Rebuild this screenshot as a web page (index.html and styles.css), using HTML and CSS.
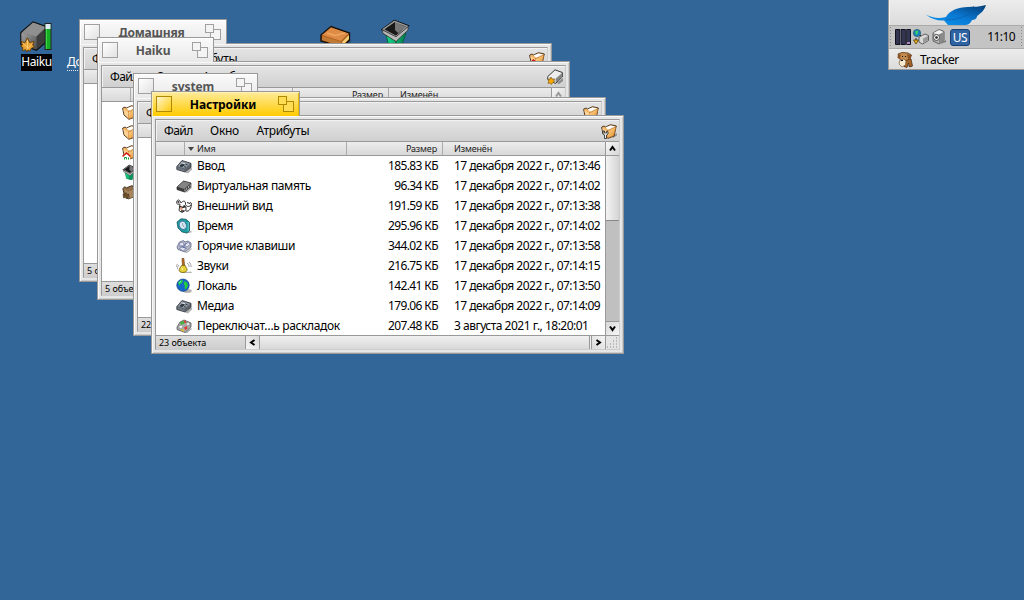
FILE: index.html
```html
<!DOCTYPE html>
<html lang="ru">
<head>
<meta charset="utf-8">
<title>Haiku</title>
<link rel="stylesheet" href="styles.css">
</head>
<body>
<svg class="defs" aria-hidden="true">
  <defs>
    <linearGradient id="gold" x1="0" y1="0" x2="1" y2="1"><stop offset="0" stop-color="#ffdc9a"/><stop offset="1" stop-color="#e38a24"/></linearGradient>
    <linearGradient id="steel" x1="0" y1="0" x2="1" y2="1"><stop offset="0" stop-color="#a2a2a2"/><stop offset="1" stop-color="#4c4c4c"/></linearGradient>
    <linearGradient id="leafblue" x1="0" y1="1" x2="1" y2="0"><stop offset="0" stop-color="#0a9af5"/><stop offset=".5" stop-color="#0a78d2"/><stop offset="1" stop-color="#023a70"/></linearGradient>
    <linearGradient id="green" x1="0" y1="0" x2="1" y2="0"><stop offset="0" stop-color="#16e08c"/><stop offset="1" stop-color="#047a50"/></linearGradient>
  </defs>
  <symbol id="folder" viewBox="0 0 16 16">
    <path d="M12 13l4-3v2.500l-4 2.500z" fill="#000" opacity=".3"/>
    <path d="M.6 4.200L3 3l1.500 1 5-2.300 5.900 1.300-.6 1.500-1.600 8.500L7 15.300 2 11z" fill="#f4b463" stroke="#3c2a18" stroke-width=".9"/>
    <path d="M4.500 4.500l5-2 4.500 1-2 2-5 1z" fill="#fff"/>
    <path d="M6.300 7.500l3-.6 1-1.600 4.700-1-2.300 8.500-6.400 2.200z" fill="url(#gold)" stroke="#a8601a" stroke-width=".5"/>
    <path d="M1.300 5L6.200 8v6L2.500 10.500z" fill="#fbd296"/>
  </symbol>
  <symbol id="folder-home" viewBox="0 0 16 16">
    <use href="#folder"/><path d="M1.500 11.500L4.500 9 8 11.500V16H1.500z" fill="#fff"/><path d="M.5 12.500L4.500 9l4 3.500" fill="none" stroke="#d01515" stroke-width="1.500"/><path d="M2.500 15.500v-2h2v2m2 0v-2" stroke="#159a35" fill="none"/>
  </symbol>
  <symbol id="folder-set" viewBox="0 0 16 16">
    <use href="#folder"/><path d="M2 8v3l1.500 1v3.500h2V12L7 11V8.500L5.700 8v2H3.500V8z" fill="#eee" stroke="#222" stroke-width=".8"/>
  </symbol>
  <symbol id="folder-brown" viewBox="0 0 16 16">
    <path d="M.8 4.500l2-1.700 1.700 1 5-2 5.500.8-.4 1.500-2 8.500L6 15 2.300 11z" fill="#8d6c46" stroke="#3c2a18" stroke-width=".9"/>
    <path d="M2 5l4 2.500 9-3-2 8-7 2z" fill="#a7865d"/>
    <path d="M1 10l2 .5 1-2 1 2 2-.5-.5 2 1 1-2.500.5L4.500 15l-.7-1.500L1.500 14z" fill="#705028" stroke="#3d2c18" stroke-width=".5"/>
  </symbol>
  <symbol id="trash" viewBox="0 0 32 32">
    <path d="M5 12l4 17 11 3 6-17z" fill="url(#green)" stroke="#063" stroke-width="1"/>
    <path d="M16 20v11" stroke="#06643f" stroke-width="1.500"/>
    <path d="M3 11.500L14.500 3l13 5-11 11z" fill="#191919" stroke="#000" stroke-width="2.400"/>
    <path d="M15 4v8l3 3 8-6z" fill="#777"/>
    <path d="M3.200 11.300L14.500 3.300l12.700 5L16 18.500z" fill="none" stroke="#999" stroke-width="1.500"/>
    <path d="M2.700 12v3L16 23.500 28 12V8.800L16 18.800z" fill="#b9b9b9" stroke="#333" stroke-width=".8"/>
  </symbol>
  <symbol id="leaf" viewBox="0 0 14 14">
    <path d="M1 4l3.500 1.500L7 .8l2 4.500L13 4l-1.200 3.600L13.500 9l-3.200 1.800-.8 2.400-2-1L6.500 14 5.400 12 2 12.500l.8-2.500L.5 8.500l1.700-1z" fill="#e9a336" stroke="#5d3b06" stroke-width=".8"/><path d="M3 6l4 4m0-7v8m4-4l-4 4" stroke="#ffd27a" stroke-width=".8" fill="none"/>
  </symbol>
  <symbol id="disk" viewBox="0 0 32 32">
    <path d="M1 12L13.500 1l14 5v15L17 30 1 24z" fill="#6e6e6e" stroke="#111" stroke-width="1.500"/>
    <path d="M1.500 12L13.500 1.500l13.500 5L17 16z" fill="#8f8f8f"/>
    <path d="M1.500 12.500L17 16v13.500L1.500 24z" fill="url(#steel)"/>
    <path d="M17 16L27 6.500V21L17 29.500z" fill="#3d3d3d"/>
  </symbol>
  <symbol id="drive" viewBox="0 0 16 16">
    <path d="M10 14l6-5v3l-4 3z" fill="#000" opacity=".35"/><path d="M.8 7.500L8 .8l7.300 2.700V8L8.500 14.500l-7.700-4z" fill="#ededed" stroke="#222" stroke-width=".9"/><path d="M8.500 9.700L15 4v4l-6.500 6z" fill="#868686"/><path d="M1.200 8l7.300 1.700v4.300l-7.300-4z" fill="#ccc"/>
    <path d="M1 10l2 .3L4 8l1.300 2.300L7.500 10l-.8 2 1 1.200-2 .5L4.300 15.500 3 14l-2 .3.600-1.600z" fill="#f5a800" stroke="#5d3b06" stroke-width=".5"/>
  </symbol>
  <symbol id="box" viewBox="0 0 16 16">
    <path d="M9 14.500l6-5h1v2l-4 4z" opacity=".3"/><path d="M.8 8.500L6 2.500l9 2.800v4L9 14 .8 11.500z" fill="#5b626b" stroke="#30343a" stroke-width=".8"/><path d="M1.500 8.300L6.200 3.200l8 2.500L9 10.500z" fill="#8c959f"/><path d="M4 8l2.500-2 2 .6-2.300 2zM9 6l2.500.8M8 8.600l2 .6" fill="#30363e" stroke="#2d333a" stroke-width=".9"/><path d="M1.500 9.300l7 2.200v2L1.500 11z" fill="#6f7882"/><path d="M5.500 4.800l4 1.200" stroke="#dce3ea"/>
  </symbol>
  <symbol id="chip" viewBox="0 0 16 16">
    <path d="M8 14l7-6 1 2-5 4.500z" opacity=".3"/><path d="M1 9l6.500-6 7.500 2v3.500L8.500 14l-7.500-2.500z" fill="#3d3d3d" stroke="#222" stroke-width=".7"/><path d="M1.500 8.700l6-5.200 6.800 1.800-6 5.700z" fill="#858585"/><path d="M9 11.300v2m1.700-3.500v2m1.800-3.700v2m1.700-3.700v2" stroke="#ccc" stroke-width=".9"/>
  </symbol>
  <symbol id="look" viewBox="0 0 16 16">
    <path d="M4 6C1 7-.2 5 1 3s3-1 4 2c1.500-2 4-3 4.500 0 .5 2-1 3-2 3l2.500 1v3l-4 2.500-3-2z" fill="#fff" stroke="#222" stroke-width=".9"/><path d="M3.500 8.500l3 1 3-1M5 13h3" stroke="#222" stroke-width="1.500" fill="none"/><path d="M4 9l2.500.6v3L4.500 12z" fill="#e39775"/><path d="M10 13c3 1 6-3 5.200-8l-1-.6M11 4.500l3 1M10 7c1 2 3 2 5 0" stroke="#222" fill="none"/><path d="M1.500 3.500l1.800 1" stroke="#333" stroke-width="1.500"/>
  </symbol>
  <symbol id="clock" viewBox="0 0 16 16">
    <path d="M9 15.500l6.500-3v2z" opacity=".3"/><path d="M1 4L5 .8l5 .5 3.500 3V13L11 15l-5-1-4-4z" fill="#1c9da0" stroke="#15575e" stroke-width=".8"/><ellipse cx="6.800" cy="7.300" rx="3.500" ry="4.300" fill="#d3e8f7" stroke="#3e769c" transform="rotate(-18 6.800 7.300)"/><path d="M6.500 5l.5 3 1.500 1" stroke="#777" fill="none" stroke-width=".6"/><path d="M12.200 4v9" stroke="#63cccc"/>
  </symbol>
  <symbol id="keys" viewBox="0 0 16 16">
    <path d="M9 15l6-5 1 1-5 4z" opacity=".3"/><path d="M1 9l2.500-5 4-1.500 1.500 1.500 3-1 3 2v4l-6 5-7-2.500z" fill="#b4b7c6" stroke="#62698e" stroke-width=".8"/><path d="M3.500 5l3.500-1 1 3-4 2zM8.500 7l3.500-2.500 2.300 1.500L11 9zM3 10.500L7 9l2.500 1L8 13z" fill="#e6e6f0" stroke="#7a7fa2" stroke-width=".7"/><path d="M4.500 7.500l6 3M10 5l-3 5" stroke="#4e5e9e" stroke-width=".7"/>
  </symbol>
  <symbol id="bell" viewBox="0 0 16 16">
    <path d="M7 14.500l8-1 1 1.500H8z" opacity=".3"/><path d="M6 .6l1.800-.3.700 7-2 .3z" fill="#c57425" stroke="#6f3d0d" stroke-width=".7"/><path d="M5.500 7.500l3.500-.3 1.300 2.500c1.800 2.300.3 4.800-3.300 4.800s-4.800-2-3.100-4.300z" fill="#e6cf38" stroke="#6a5c0c" stroke-width=".8"/><path d="M5.500 9.500L6.500 11M6 12l1-1" stroke="#fffbb3"/><path d="M3 7C2 8 1.600 9 1.500 11M1.500 6C.8 7 .3 8 .2 9M11 5c1.500 1 2 2 2.200 4M13 4c1.500 1.300 2 3 2.200 5" fill="none" stroke="#777" stroke-width=".7"/>
  </symbol>
  <symbol id="globe" viewBox="0 0 16 16">
    <ellipse cx="11.500" cy="13" rx="4.300" ry="1.900" opacity=".3"/><circle cx="7" cy="7.200" r="6.200" fill="#1668c8" stroke="#123e84" stroke-width=".7"/><path d="M2 4.500L5 2l2 .6-1 2.400L4 6 3.500 8zM8.500 3l2.500 1.500 1 3-2 4L8.500 10l.5-2-1.200-2z" fill="#25ce3b"/><path d="M3 5l2-2" stroke="#49e8f5"/>
  </symbol>
  <symbol id="keymap" viewBox="0 0 16 16">
    <path d="M9 15l6-5 1 1-5 4z" opacity=".35"/><path d="M1 9l3-5 4-2 7 3v4l-6 5.500-8-3z" fill="#a9a9a9" stroke="#5a5a5a" stroke-width=".8"/><path d="M4 4.500L7.500 3 9 5 5 7z" fill="#3bb63b"/><path d="M10 5l3-.5 1 2-3 1.500z" fill="#f0f0f0" stroke="#777" stroke-width=".5"/><path d="M2.500 8.500L5.500 7l1.700 2-3 2z" fill="#f4f4f4" stroke="#777" stroke-width=".5"/><path d="M8 9.500l2.500-1.500 1 2.500-2 1.500zM7.500 3l2-.5 1 2-1.500.7z" fill="#e23b2d"/><path d="M5 11.500l3 1.500" stroke="#dfba2c" stroke-width="1.500"/>
  </symbol>
  <symbol id="up" viewBox="0 0 13 13"><path d="M4 8.500L6.500 5 9 8.500" fill="none" stroke="currentColor" stroke-width="2"/></symbol>
  <symbol id="zoomer" viewBox="0 0 17 17">
    <rect x="5.500" y="5.500" width="10" height="10"/><rect x=".5" y=".5" width="8" height="8"/>
  </symbol>
</svg>

<main class="desktop">
  <div class="volume">
    <svg class="volume-icon" viewBox="0 0 32 32"><use href="#disk" width="31" height="31"/><rect x="25" y="2.500" width="6" height="26" fill="#14ad24" stroke="#222"/><rect x="25.500" y="3" width="5" height="5" fill="#dfe8f5"/><path d="M26.500 8v20" stroke="#42d44d"/><use href="#leaf" y="16" width="15" height="15"/></svg>
    <span class="volume-name">Haiku</span>
  </div>
  <span class="home-link">Домашняя</span>
  <svg class="home-icon" viewBox="0 0 8 20"><path d="M1 1c5 2 6 10 1 17" fill="#1b1b1b"/></svg>
  <svg class="package" viewBox="0 0 32 32"><path d="M27 17l5-2-5 6z" opacity=".3"/><path d="M1 10L11 1.500 29.500 8v7L22 22 1 16z" fill="#a85a1c" stroke="#15100a" stroke-width="1.400"/><path d="M2 10L11 2.500 28.500 8.500 21 16z" fill="#de8b45"/><path d="M7 8l8 2.500L25 8" fill="none" stroke="#efa763" stroke-width="1.600"/><path d="M2 11l19 5.500v5L2 15z" fill="#c07a34"/><path d="M22 17l7-7V14l-6 6z" fill="#f4cf74"/></svg>
  <svg class="trash-icon"><use href="#trash"/></svg>

  <section class="window w1">
    <header class="tab"><i class="close"></i><b>Домашняя</b><svg class="zoomer"><use href="#zoomer"/></svg></header>
    <div class="frame"><div class="inner">
      <nav class="menubar"><span>Файл</span><span>Окно</span><span>Атрибуты</span><svg><use href="#folder-home"/></svg></nav>
      <div class="mid"><div class="list"><div class="head"><span></span><span>Имя</span><span>Размер</span><span>Изменён</span></div></div>
      <div class="vbar"><svg class="btn"><use href="#up"/></svg><i></i></div></div>
      <footer><span class="count">5 объектов</span></footer>
    </div></div>
  </section>

  <section class="window w2">
    <header class="tab"><i class="close"></i><b>Haiku</b><svg class="zoomer"><use href="#zoomer"/></svg></header>
    <div class="frame"><div class="inner">
      <nav class="menubar"><span>Файл</span><span>Окно</span><span>Атрибуты</span><svg><use href="#drive"/></svg></nav>
      <div class="mid"><div class="list"><div class="head"><span></span><span>Имя</span><span>Размер</span><span>Изменён</span></div>
        <div class="row"><svg><use href="#folder"/></svg></div>
        <div class="row"><svg><use href="#folder"/></svg></div>
        <div class="row"><svg><use href="#folder-home"/></svg></div>
        <div class="row"><svg><use href="#trash"/></svg></div>
        <div class="row"><svg><use href="#folder-brown"/></svg></div>
      </div><div class="vbar"><svg class="btn off"><use href="#up"/></svg><i></i></div></div>
      <footer><span class="count">5 объектов</span></footer>
    </div></div>
  </section>

  <section class="window w3">
    <header class="tab"><i class="close"></i><b>system</b><svg class="zoomer"><use href="#zoomer"/></svg></header>
    <div class="frame"><div class="inner">
      <nav class="menubar"><span>Файл</span><span>Окно</span><span>Атрибуты</span><svg><use href="#folder"/></svg></nav>
      <div class="mid"><div class="list"><div class="head"><span></span><span>Имя</span><span>Размер</span><span>Изменён</span></div></div>
      <div class="vbar"><svg class="btn"><use href="#up"/></svg><i></i></div></div>
      <footer><span class="count">22 объекта</span></footer>
    </div></div>
  </section>

  <section class="window w4 active">
    <header class="tab"><i class="close"></i><b>Настройки</b><svg class="zoomer"><use href="#zoomer"/></svg></header>
    <div class="frame"><div class="inner">
      <nav class="menubar"><span>Файл</span><span>Окно</span><span>Атрибуты</span><svg><use href="#folder-set"/></svg></nav>
      <div class="mid"><div class="list"><div class="head"><span></span><span class="sorted">Имя</span><span>Размер</span><span>Изменён</span></div>
        <div class="row"><svg><use href="#box"/></svg><span>Ввод</span><span>185.83 КБ</span><span>17 декабря 2022 г., 07:13:46</span></div>
        <div class="row"><svg><use href="#chip"/></svg><span>Виртуальная память</span><span>96.34 КБ</span><span>17 декабря 2022 г., 07:14:02</span></div>
        <div class="row"><svg><use href="#look"/></svg><span>Внешний вид</span><span>191.59 КБ</span><span>17 декабря 2022 г., 07:13:38</span></div>
        <div class="row"><svg><use href="#clock"/></svg><span>Время</span><span>295.96 КБ</span><span>17 декабря 2022 г., 07:14:02</span></div>
        <div class="row"><svg><use href="#keys"/></svg><span>Горячие клавиши</span><span>344.02 КБ</span><span>17 декабря 2022 г., 07:13:58</span></div>
        <div class="row"><svg><use href="#bell"/></svg><span>Звуки</span><span>216.75 КБ</span><span>17 декабря 2022 г., 07:14:15</span></div>
        <div class="row"><svg><use href="#globe"/></svg><span>Локаль</span><span>142.41 КБ</span><span>17 декабря 2022 г., 07:13:50</span></div>
        <div class="row"><svg><use href="#box"/></svg><span>Медиа</span><span>179.06 КБ</span><span>17 декабря 2022 г., 07:14:09</span></div>
        <div class="row"><svg><use href="#keymap"/></svg><span>Переключат…ь раскладок</span><span>207.48 КБ</span><span>3 августа 2021 г., 18:20:01</span></div>
      </div><div class="vbar"><svg class="btn"><use href="#up"/></svg><i class="thumb"></i><svg class="btn down"><use href="#up"/></svg></div></div>
      <footer><span class="count">23 объекта</span><svg class="btn left"><use href="#up"/></svg><i class="hthumb"></i><svg class="btn right"><use href="#up"/></svg><svg class="grip" viewBox="0 0 13 13"><path d="M10 2h1M7 5h1M10 5h1M4 8h1M7 8h1M10 8h1M1 11h1M4 11h1M7 11h1M10 11h1" stroke="#8a8a8a"/></svg></footer>
    </div></div>
  </section>

  <aside class="deskbar">
    <div class="leafmenu"><svg viewBox="0 0 64 22"><path d="M1 10.500c6 3.500 13 4.500 20 2.500 4-7 12-9.500 22-10 6-.3 12 0 18-2-2 6-5 8-9 11 0 3-3 4-5 4-1 3-4 5-7 5H23l-4-4.500C13 17 6 15 1 10.500z" fill="url(#leafblue)"/><path d="M21 16c12 0 24-5 36-13" stroke="#0a5aa4" stroke-width=".6" fill="none"/></svg></div>
    <div class="tray">
      <i class="dots"></i>
      <svg class="cpu" viewBox="0 0 16 16"><path d="M.5.500h4.500v15H.5zM6 .5h4.500v15H6zM11.500.5h4v15h-4z" fill="#33344f" stroke="#101020"/><path d="M5.500 0v16M11 0v16" stroke="#888" stroke-width=".5"/><path d="M12 13h3v2h-3z" fill="#b184c2"/></svg>
      <svg class="t16" viewBox="0 0 16 16"><path d="M7 6l2 2M3 9v3" stroke="#222"/><circle cx="4" cy="4" r="3.600" fill="#1f84ba" stroke="#175070" stroke-width=".7"/><path d="M2 2l3-.5v3L3 6z" fill="#35cb70"/><path d="M6 8l6-3 3.500 1.500v5L9.500 15 6 13z" fill="#d9d9d9" stroke="#444" stroke-width=".8"/><path d="M10 9.500l5-2.500v4l-5 3z" fill="#999"/><path d="M.5 11h5L3 15z" fill="#f0ba26" stroke="#543b00" stroke-width=".8"/></svg>
      <svg class="t16" viewBox="0 0 16 16"><path d="M9 15l6-4v2z" opacity=".4"/><path d="M2 4l6-3.500 5 2v9L8 15l-6-3z" fill="#b4b4b4" stroke="#4a4a4a" stroke-width=".8"/><path d="M2.500 4L8 1l4.500 2L8 5.500z" fill="#f2f2f2"/><path d="M8 5.500L12.800 3v8.500L8 14.500z" fill="#8a8a8a"/><circle cx="5.500" cy="8.500" r="3" fill="#eee" stroke="#555"/><circle cx="5.500" cy="8.500" r="1.300" fill="#222"/></svg>
      <span class="layout">US</span>
      <time>11:10</time>
      <i class="dots"></i>
    </div>
    <div class="app">
      <svg class="t16" viewBox="0 0 16 16"><path d="M9 14l6-2v3z" opacity=".3"/><path d="M9 6l5 1 1.500 7-3 1-1-4-1.500 4.500-3-1z" fill="#a5662e" stroke="#45250a" stroke-width=".7"/><path d="M1 2l4-1.500 6 .5 3.500 2-1.500 4-4 1.500-6-1z" fill="#c58c50" stroke="#573211" stroke-width=".8"/><path d="M1 2L.5 6l2 1 1.500-4zM10 2l1 5 2.500-1 .5-3z" fill="#8a5224"/><path d="M3 8l4-1 2 2-.5 4L5 15l-3-3z" fill="#f7ead2" stroke="#7a5831" stroke-width=".7"/><path d="M5 4.500h1M8 4.500h1M4 8.500h2" stroke="#111" stroke-width="1.200"/></svg>
      <span>Tracker</span>
    </div>
  </aside>
</main>
</body>
</html>
```
FILE: styles.css
```css
* { box-sizing: border-box; }
body { margin: 0; font: 12px/20px "Noto Sans", sans-serif; color: #000; letter-spacing: -.37px; }
.defs { position: absolute; width: 0; height: 0; }
.desktop { position: relative; width: 1024px; height: 600px; overflow: hidden; background: #336698; white-space: nowrap; }

.volume { position: absolute; left: 20px; top: 21px; display: flex; flex-direction: column; }
.volume-icon { width: 32px; height: 32px; }
.volume-name { margin: 1px 0 0 1px; width: 31px; height: 17px; line-height: 16px; text-align: center; background: #000; color: #fff; }
.home-link { position: absolute; left: 67px; top: 54px; height: 17px; line-height: 16px; color: #fff; border-bottom: 1px dotted #dfe8f0; }
.home-icon { position: absolute; left: 222px; top: 24px; width: 7px; height: 18px; }
.package { position: absolute; left: 320px; top: 25px; width: 32px; height: 32px; }
.trash-icon { position: absolute; left: 380px; top: 18px; width: 32px; height: 32px; }

.window { position: absolute; width: 473px; height: 263px; --line: #999; --text: #555; }
.w1 { left: 79px; top: 19px; --tab: 148px; }
.w2 { left: 97px; top: 37px; --tab: 117px; }
.w3 { left: 133px; top: 73px; --tab: 125px; }
.w4 { left: 151px; top: 91px; --tab: 149px; }
.tab { position: relative; z-index: 1; display: flex; align-items: flex-start; justify-content: space-between; width: var(--tab); height: 25px; padding: 4px 4px 0; border: 1px solid var(--line); border-bottom: 0; background: linear-gradient(#fafafa, #e9e9e9); box-shadow: inset 1px 1px #fff; color: var(--text); }
.active .tab { --text: #000; background: linear-gradient(#ffeb9c, #ffcb00); box-shadow: inset 1px 1px #fff0b5, inset -1px 0 #e8b900; }
.tab b { line-height: 17px; letter-spacing: -.1px; margin-right: 4px; }
.w1 .tab b { margin-right: 2px; letter-spacing: -.2px; }
.close { width: 16px; height: 16px; border: 1px solid #a0a0a0; background: linear-gradient(135deg, #fff, #e2e2e2); }
.zoomer { width: 17px; height: 17px; fill: #f4f4f4; stroke: #a0a0a0; }
.active .close { border-color: #b08a00; background: linear-gradient(135deg, #fff6cc, #ffcc10); }
.active .zoomer { stroke: #b08a00; fill: #ffdd55; }
.frame { height: 239px; margin-top: -1px; padding: 3px; border: 1px solid #999; background: #e6e6e6; box-shadow: inset 1px 1px #f8f8f8, inset -1px -1px #ccc; }
.inner { height: 231px; display: flex; flex-direction: column; border: 1px solid #999; border-right-color: #ccc; border-bottom-color: #ccc; background: #d8d8d8; }
.menubar { display: flex; align-items: center; height: 22px; padding-left: 8px; gap: 17.500px; border-bottom: 1px solid #999; background: linear-gradient(#e4e4e4, #d0d0d0); box-shadow: inset 1px 1px #f2f2f2; letter-spacing: -.3px; }
.menubar span:first-child { letter-spacing: -.6px; }
.menubar svg { width: 16px; height: 16px; margin: 1px 2px 0 auto; }
.mid { display: flex; flex: 1; min-height: 0; }
.list { width: 449px; overflow: hidden; background: #fff; }
.head { display: grid; grid-template-columns: 29px 162px 96px 162px; height: 14px; border-bottom: 1px solid #999; background: linear-gradient(#ececec, #d9d9d9); font-size: 9px; line-height: 14px; letter-spacing: -.15px; color: #222; }
.head span { border-right: 1px solid #aaa; height: 13px; }
.head span:nth-child(2) { padding-left: 12px; }
.head span:nth-child(3) { text-align: right; padding-right: 5px; }
.head span:nth-child(4) { padding-left: 11px; border: 0; }
.head span.sorted { display: flex; align-items: center; padding-left: 3px; }
.sorted::before { content: ""; border: 3.500px solid transparent; border-top: 4px solid #444; border-bottom: 0; margin-right: 3px; }
.row { display: grid; grid-template-columns: 21px 150px 91px 1fr; height: 20px; padding-left: 20px; }
.row svg { width: 16px; height: 16px; margin-top: 2px; }
.row span:nth-child(3) { text-align: right; letter-spacing: -.6px; }
.row span:nth-child(4) { padding-left: 16px; letter-spacing: -.51px; }
.vbar { width: 14px; display: flex; flex-direction: column; border-left: 1px solid #999; background: #c0c0c0; }
.btn { flex: none; width: 13px; height: 13px; background: linear-gradient(135deg, #f6f6f6, #d8d8d8); color: #000; }
.off { color: #999; }
.vbar .btn { height: 14px; border-bottom: 1px solid #999; }
.thumb { height: 65px; border-bottom: 1px solid #888; background: linear-gradient(90deg, #f4f4f4, #d4d4d4); }
.vbar .down { margin-top: auto; transform: rotate(180deg); }
.list { flex: 1; }
footer { display: flex; height: 14px; border-top: 1px solid #999; background: #d9d9d9; }
.count { width: 90px; padding-left: 3px; border-right: 1px solid #999; font-size: 9px; line-height: 14px; letter-spacing: -.05px; background: linear-gradient(#dedede, #cecece); }
.left { transform: rotate(-90deg); }
.right { transform: rotate(90deg); }
.hthumb { width: 333px; border: solid #999; border-width: 0 1px; box-shadow: inset -1px 0 #eee, inset -2px 0 #999; background: linear-gradient(#f0f0f0, #d8d8d8); }
.grip { width: 14px; height: 13px; border-left: 1px solid #999; margin-left: auto; background: #e4e4e4; }

.deskbar { position: absolute; right: 0; top: 0; width: 136px; height: 70px; border: 1px solid #999; border-width: 0 0 1px 1px; background: #ddd; }
.leafmenu { height: 26px; display: flex; justify-content: center; background: linear-gradient(#ececec, #dcdcdc); border-bottom: 1px solid #aaa; box-shadow: inset 1px 0 #f5f5f5; }
.leafmenu svg { width: 64px; height: 22px; margin: 4px 0 0 0; }
.tray { display: flex; align-items: center; height: 23px; padding: 0 2px 0 1px; background: #c4c4c4; border-bottom: 1px solid #aaa; }
.dots { width: 1px; height: 20px; background: repeating-linear-gradient(#8a8a8a 0 1px, transparent 1px 3px); }
.cpu { width: 16px; height: 16px; margin: 0 2px 0 4px; }
.t16 { width: 16px; height: 16px; }
.tray .t16 { margin-right: 2px; }
.layout { width: 20px; height: 17px; border: 1px solid #174077; border-radius: 3px; background: #2f62a0; color: #fff; text-align: center; line-height: 15px; margin-left: 1px; }
.tray time { margin: 0 6px 0 auto; letter-spacing: -.6px; }
.app { display: flex; align-items: center; gap: 7px; height: 20px; padding: 1px 0 0 8px; background: linear-gradient(#ececec, #dcdcdc); letter-spacing: -.35px; }
```
